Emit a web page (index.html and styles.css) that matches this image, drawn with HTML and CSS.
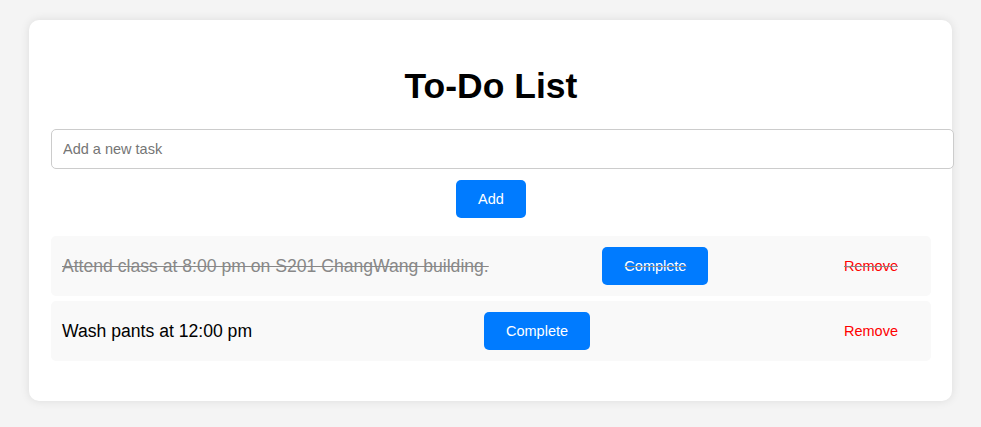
FILE: index.html
```html
<!DOCTYPE html>
<html lang="en">
<head>
<meta charset="utf-8">
<title>To-Do List</title>
<link rel="stylesheet" href="styles.css">
</head>
<body>
<div class="container">
  <h1 class="title">To-Do List</h1>
  <input class="task-input" type="text" placeholder="Add a new task">
  <div class="add-row"><button class="btn btn-primary">Add</button></div>
  <ul class="task-list">
    <li class="task completed">
      <span class="task-text">Attend class at 8:00 pm on S201 ChangWang building.</span>
      <button class="btn btn-primary">Complete</button>
      <button class="btn btn-remove">Remove</button>
    </li>
    <li class="task">
      <span class="task-text">Wash pants at 12:00 pm</span>
      <button class="btn btn-primary">Complete</button>
      <button class="btn btn-remove">Remove</button>
    </li>
  </ul>
</div>
</body>
</html>
```

FILE: styles.css
```css
html, body {
  margin: 0;
  padding: 0;
}
body {
  background: #f4f4f4;
  font-family: "Liberation Sans", Arial, sans-serif;
  padding: 20px 0;
}
.container {
  width: 880px;
  margin: 0 auto;
  padding: 20px 21px 20px 22px;
  background: #fff;
  border-radius: 10px;
  box-shadow: 0 0 10px rgba(0, 0, 0, 0.1);
}
.title {
  margin: 26px 0 23px;
  font-size: 35.5px;
  line-height: 40px;
  font-weight: bold;
  text-align: center;
  color: #000;
}
.task-input {
  display: block;
  width: 100%;
  margin: 0;
  padding: 10px 10px 10px 11px;
  border: 1px solid #ccc;
  border-radius: 5px;
  font-family: "Liberation Sans", Arial, sans-serif;
  font-size: 14.5px;
  line-height: 18px;
  color: #000;
  outline: none;
}
.task-input::placeholder {
  color: #757575;
}
.add-row {
  display: flex;
  justify-content: center;
  margin-top: 11px;
}
.btn {
  font-family: "Liberation Sans", Arial, sans-serif;
  font-size: 14.5px;
  line-height: 18px;
  padding: 10px 22px;
  border: none;
  border-radius: 5px;
  cursor: pointer;
}
.btn-primary {
  background: #007bff;
  color: #fff;
}
.btn-remove {
  background: transparent;
  color: #ff0000;
}
.task-list {
  list-style: none;
  margin: 18px 0 20px;
  padding: 0;
  display: flex;
  flex-direction: column;
  gap: 5px;
}
.task {
  display: flex;
  align-items: center;
  justify-content: space-between;
  padding: 11px;
  background: #f9f9f9;
  border-radius: 5px;
  font-size: 17.6px;
  color: #000;
}
.task.completed {
  text-decoration: line-through;
  color: #888;
}
```
